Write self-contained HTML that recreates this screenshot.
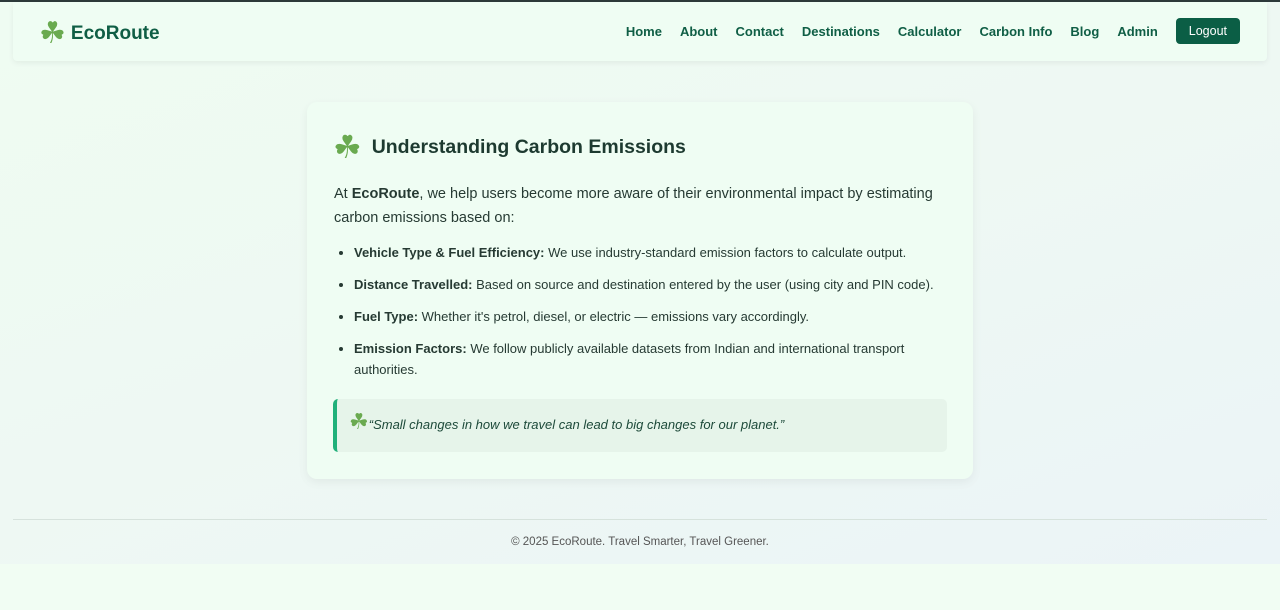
<!DOCTYPE html>
<html><head><meta charset="utf-8"><style>
*{box-sizing:border-box;margin:0;padding:0}
html,body{width:1280px;height:610px;overflow:hidden}
body{font-family:"Liberation Sans","DejaVu Sans",sans-serif;background:#f1fdf3;border-top:2px solid #2d3a3a;position:relative}
.bg{position:absolute;left:0;top:0;width:1280px;height:562px;background:linear-gradient(160deg,#effcf2 0%,#eef8f3 50%,#ebf4f7 100%)}
.nav{position:absolute;left:13px;top:0;width:1254px;height:59px;background:#effdf3;box-shadow:0 2px 6px rgba(0,0,0,.06);border-radius:0 0 4px 4px}
.logo{position:absolute;left:26px;top:14px;font-size:19px;font-weight:bold;color:#0f5e45;display:flex;align-items:center}
.sh{font-family:"DejaVu Sans",sans-serif;color:#6aaa50;font-weight:normal}
.links{position:absolute;right:27px;top:16px;display:flex;align-items:center;font-size:13px;font-weight:bold;color:#0f5e45}
.links span{margin-left:18px}
.btn{margin-left:14px;background:#0b5e45;color:#fff;border-radius:4px;padding:6px 13px;font-size:12.5px;font-weight:normal}
.card{position:absolute;left:307px;top:100px;width:666px;height:377px;background:#effdf3;border-radius:10px;box-shadow:0 3px 10px rgba(0,0,0,.06)}
h1{position:absolute;left:26px;top:26px;font-size:19.5px;color:#1d3a30;font-weight:bold;display:flex;align-items:center}
.p{position:absolute;left:27px;top:80px;width:620px;font-size:14.5px;line-height:24px;color:#263a33}
ul{position:absolute;left:47px;top:140px;width:600px;font-size:13px;color:#263a33;line-height:21px}
li{margin-bottom:11px}
.q{position:absolute;left:26px;top:297px;width:614px;height:53px;background:#e6f4ea;border-left:4px solid #20b07a;border-radius:5px}
.q div{position:absolute;left:12px;top:11px;font-size:13px;font-style:italic;color:#1d4a3a}
.hr{position:absolute;left:13px;top:517px;width:1254px;border-top:1px solid #d6e2dc}
.ft{position:absolute;left:0;width:1280px;top:534px;text-align:center;font-size:11.5px;color:#555}
</style></head><body>
<div class="bg"></div>
<div class="nav">
<div class="logo"><span class="sh" style="font-size:30px;margin-right:5px">☘</span>EcoRoute</div>
<div class="links"><span>Home</span><span>About</span><span>Contact</span><span>Destinations</span><span>Calculator</span><span>Carbon Info</span><span>Blog</span><span>Admin</span><span class="btn">Logout</span></div>
</div>
<div class="card">
<h1><span class="sh" style="font-size:32px;margin-right:10px">☘</span>Understanding Carbon Emissions</h1>
<div class="p">At <b>EcoRoute</b>, we help users become more aware of their environmental impact by estimating carbon emissions based on:</div>
<ul>
<li><b>Vehicle Type &amp; Fuel Efficiency:</b> We use industry-standard emission factors to calculate output.</li>
<li><b>Distance Travelled:</b> Based on source and destination entered by the user (using city and PIN code).</li>
<li><b>Fuel Type:</b> Whether it's petrol, diesel, or electric — emissions vary accordingly.</li>
<li><b>Emission Factors:</b> We follow publicly available datasets from Indian and international transport authorities.</li>
</ul>
<div class="q"><div><span class="sh" style="font-style:normal;font-size:22px">☘</span>“Small changes in how we travel can lead to big changes for our planet.”</div></div>
</div>
<div class="hr"></div>
<div class="ft">© 2025 EcoRoute. Travel Smarter, Travel Greener.</div>
</body></html>
